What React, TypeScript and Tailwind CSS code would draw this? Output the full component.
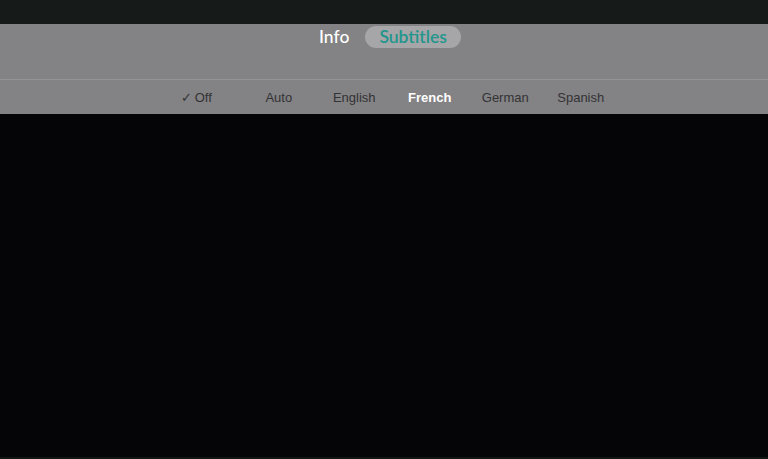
import React from 'react'

const languages = ['Off', 'Auto', 'English', 'French', 'German', 'Spanish']

export default function App() {
  const selected = 'Off'
  const focused = 'French'

  return (
    <div className="w-[768px] h-[459px] bg-[#050407] flex flex-col overflow-hidden" style={{ fontFamily: '"Liberation Sans", Arial, sans-serif' }}>
      {/* barra superior */}
      <div className="h-[24px] bg-[#161b19] shrink-0"></div>

      {/* panel de info / subtítulos */}
      <div className="bg-[#838284] shrink-0">
        <div className="h-[55px] flex justify-center items-start pt-[2px] gap-[16px] pl-[12px]" style={{ fontFamily: 'Lato, sans-serif' }}>
          <span className="text-[17.5px] leading-[22px] text-white font-medium">Info</span>
          <span className="h-[22px] px-[14px] rounded-full bg-[#a6a5a7] text-[17.5px] leading-[22px] text-[#22968d] font-semibold">Subtitles</span>
        </div>
        <div className="h-[1px] bg-[#959396]"></div>
        <div className="h-[34px] flex justify-center items-center pl-[16px] pt-[2px]">
          {languages.map((lang) => (
            <div key={lang} className="w-[75.5px] flex justify-center">
              <span className={`relative text-[13px] ${lang === focused ? 'text-white font-bold' : 'text-[#333335]'}`}>
                {lang === selected && (
                  <span className="absolute right-full mr-[3px]">✓</span>
                )}
                {lang}
              </span>
            </div>
          ))}
        </div>
      </div>

      <div className="flex-1"></div>
      <div className="h-[2px] bg-[#111713] shrink-0"></div>
    </div>
  )
}
